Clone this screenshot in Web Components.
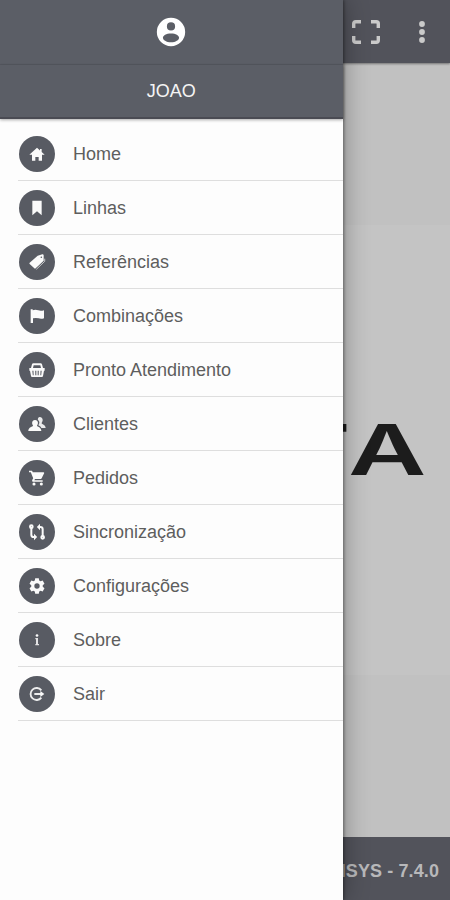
<!DOCTYPE html>
<html lang="pt-BR">
<head>
<meta charset="utf-8">
<meta name="viewport" content="width=device-width, initial-scale=1">
<title>Menu</title>
<style>
html, body { margin: 0; height: 100%; overflow: hidden; }
body { font-family: "Liberation Sans", Arial, sans-serif; font-size: 18px; }
</style>
</head>
<body>
<menu-app>
  <catalog-page slot="page"></catalog-page>
  <side-drawer slot="drawer" user="JOAO">
    <menu-item icon="home">Home</menu-item>
    <menu-item icon="bookmark">Linhas</menu-item>
    <menu-item icon="tag">Referências</menu-item>
    <menu-item icon="flag">Combinações</menu-item>
    <menu-item icon="basket">Pronto Atendimento</menu-item>
    <menu-item icon="people">Clientes</menu-item>
    <menu-item icon="cart">Pedidos</menu-item>
    <menu-item icon="sync">Sincronização</menu-item>
    <menu-item icon="gear">Configurações</menu-item>
    <menu-item icon="info">Sobre</menu-item>
    <menu-item icon="exit">Sair</menu-item>
  </side-drawer>
</menu-app>
<script>
const ICONS = {
  account: '<path fill-rule="evenodd" d="M12 2a10 10 0 1 0 0 20 10 10 0 0 0 0-20Zm0 3.200a2.900 2.900 0 1 1 0 5.800 2.900 2.900 0 0 1 0-5.800ZM12 13c3.400 0 5.700 1.400 5.700 3s-2.400 3.200-5.700 3.200S6.300 17.600 6.300 16s2.300-3 5.700-3Z"/>',
  expand: '<path fill="none" stroke="currentColor" stroke-width="3.400" d="M1.700 9V4.700q0-2 2-2H9M19 2.700h5.300q2 0 2 2V9M26.300 17v4.300q0 2-2 2H19M9 23.300H3.700q-2 0-2-2V17"/>',
  more: '<circle cx="12" cy="4" r="2.900"/><circle cx="12" cy="12" r="2.900"/><circle cx="12" cy="20" r="2.900"/>',
  home: '<path d="M12 2.500 .5 13H4.500v9h5v-5.500h5V22h5v-9h4L19 9V4.500h-2.500v2.200Z"/>',
  bookmark: '<path d="M5 1h14v22L12 17 5 23Z"/>',
  tag: '<path fill-rule="evenodd" d="M13 2.500 20 .5q1.800-.2 2 1.500L22 10 10 21.500q-1 1-2 0L1 15q-1-1 0-2Zm5.500 1.200a1.200 1.200 0 1 0 0 2.400 1.200 1.200 0 0 0 0-2.400Z"/><path fill="none" stroke="currentColor" stroke-width="1" d="M23.600 7v4L11 23"/>',
  flag: '<path d="M2.500 2h3v1.500q4-1.600 8.500 0 4 1.300 8.500-.3v12q-4 1.500-8 .3-4.500-1.200-8.500 0V22.500h-3.500Z"/>',
  basket: '<path fill-rule="evenodd" d="M6.500 2h11q1.500 0 2 1.500L21 9h2.500v4h-1L21 21q-.3 1.500-1.500 1.500h-15Q3.300 22.500 3 21L1.500 13h-1V9H3l1.500-5.500Q5 2 6.500 2ZM7 4.800 6 9h12l-1-4.200ZM5 13l.7 7H7l-.3-7Zm4.300 0 .2 7H11v-7Zm3.700 0v7h1.500l.2-7Zm4.300 0-.3 7h1.300l.7-7Z"/>',
  people: '<path opacity=".9" d="M16 1.500c3 0 4.800 2.200 4.500 5-.2 2-1.100 3.100-1.600 4.200 0 1.600 6.100 1.700 6.100 7.300h-6.500c-.7-2-2.800-3.100-4.500-4 2-3 2.400-6.600-.8-8.500.3-2.500 1-4 2.800-4Z"/><path d="M9 6c3 0 4.700 2 4.400 4.700-.2 1.700-1 2.800-1.500 3.800.3 1.600 6.600 1.800 6.600 8H-1c0-6.200 6.800-6.400 7.200-8-.5-1-1.400-2.100-1.500-3.800C4.500 8 6 6 9 6Z"/>',
  cart: '<path fill-rule="evenodd" d="M0 1h4.500l1.200 2.500h16q1.500 0 1 1.500L19 12.500q-.5 1-1.500 1H9l-1 2h12.500v2.200H7q-3.300-.2-2-3.200l1.300-2.300L2.700 3.300H0Z"/><circle cx="7.500" cy="21" r="2.300"/><circle cx="18.500" cy="21" r="2.300"/>',
  sync: '<g fill="none" stroke="currentColor" stroke-width="3"><circle cx="3.500" cy="4" r="2"/><circle cx="20.500" cy="20" r="2"/><path d="M3.500 6v10q0 3.500 3.500 3.500h2M20.500 18V8q0-3.500-3.500-3.500h-2"/></g><path d="m7.500 14.800 4.700 4.700-4.700 4.700ZM16.500-.2l-4.700 4.700 4.700 4.700Z"/>',
  gear: '<path fill-rule="evenodd" d="m9.300.5-.6 3.200-2 1.200-3.200-1.200L.8 8.500l2.600 2.200v2.600L.8 15.500l2.700 4.800 3.200-1.200 2 1.200.6 3.200h5.400l.6-3.200 2-1.200 3.200 1.200 2.700-4.800-2.600-2.200v-2.600l2.600-2.200-2.700-4.800-3.200 1.200-2-1.200-.6-3.200ZM12 8a4 4 0 1 1 0 8 4 4 0 0 1 0-8Z"/>',
  info: '<circle cx="12" cy="5.200" r="2"/><path opacity=".85" d="M9.500 9h4v9H15v2H9.500v-2h1v-7h-1Z"/>',
  exit: '<path opacity=".92" fill="none" stroke="currentColor" stroke-width="2.800" d="M18.500 6.500A9 9 0 1 0 18.500 17.500M8 12h11"/><path d="m17 7.500 6 4.500-6 4.500Z"/>'
};
const svg = (name, box = '0 0 24 24') =>
  `<svg viewBox="${box}" fill="currentColor" aria-hidden="true">${ICONS[name]}</svg>`;

function define(name, render) {
  customElements.define(name, class extends HTMLElement {
    connectedCallback() {
      if (!this.shadowRoot) this.attachShadow({ mode: 'open' }).innerHTML = render(this);
    }
  });
}

define('menu-app', () => `
  <style>
    :host { display: block; position: relative; width: 450px; height: 900px; overflow: hidden; }
    ::slotted([slot=drawer]) { position: absolute; inset: 0 auto 0 0; }
  </style>
  <slot name="page"></slot><slot name="drawer"></slot>`);

define('brand-mark', () => `
  <style>
    :host { display: block; font: 600 70px/84px Inter, sans-serif; color: #1c1c1c; }
    span { display: block; width: max-content; transform: scaleX(1.53); transform-origin: right;
      white-space: nowrap; letter-spacing: 4.500px; }
  </style>
  <span>TA</span>`);

define('catalog-page', () => `
  <style>
    :host { display: flex; flex-direction: column; height: 100%; background: #c1c1c1; }
    header { flex: 0 0 63px; display: flex; align-items: center; justify-content: flex-end; gap: 30px;
      box-sizing: border-box; padding: 0 16px 0 0; background: #52535b; color: #cacaca; box-shadow: 0 1px 2px #0006; }
    .expand { width: 28px; height: 26px; }
    .more { width: 24px; height: 24px; }
    svg { display: block; width: 100%; height: 100%; }
    main { flex: 1; display: flex; flex-direction: column; justify-content: center; }
    .banner { height: 450px; display: flex; align-items: center; justify-content: flex-end;
      box-sizing: border-box; padding-right: 17px; background: #c4c4c4; }
    footer { flex: 0 0 63px; display: flex; align-items: center; justify-content: flex-end; box-sizing: border-box;
      padding: 5px 11px 0 0; background: #52535b; color: #b8b8ba; font-weight: bold; font-size: 18px; letter-spacing: .1px; }
  </style>
  <header><div class="expand">${svg('expand', '0 0 28 26')}</div><div class="more">${svg('more')}</div></header>
  <main><div class="banner"><brand-mark></brand-mark></div></main>
  <footer>ISYS - 7.4.0</footer>`);

define('side-drawer', el => `
  <style>
    :host { display: flex; flex-direction: column; width: 342.500px; background: #fdfdfd;
      box-shadow: 1px 0 3px #0006, 0 0 25px #0005; }
    .avatar, .user { display: flex; align-items: center; justify-content: center; box-sizing: border-box;
      background: #5b5e66; color: #fff; }
    .avatar { height: 65px; border-bottom: 1px solid #555860; }
    svg { width: 34px; height: 34px; }
    .user { height: 54px; padding-top: 1px; border-bottom: 2px solid #4a4b53; box-shadow: 0 1px 3px #0005; color: #f4f4f4; }
    nav { display: flex; flex-direction: column; padding: 8px 0 0 18px; }
  </style>
  <div class="avatar">${svg('account')}</div>
  <div class="user">${el.getAttribute('user')}</div>
  <nav><slot></slot></nav>`);

define('menu-item', el => `
  <style>
    :host { display: flex; align-items: center; gap: 18.500px; height: 54px; box-sizing: border-box;
      border-bottom: 1px solid #dedede; color: #5e5e5e; }
    .disc { display: grid; place-items: center; width: 36px; height: 36px; margin: 1px 0 0 .5px; border-radius: 50%;
      background: #585b63; color: #fafafa; }
    svg { display: block; width: 16px; height: 16px; overflow: visible; }
    span { padding-top: 2px; }
  </style>
  <div class="disc">${svg(el.getAttribute('icon'))}</div><span><slot></slot></span>`);
</script>
</body>
</html>
